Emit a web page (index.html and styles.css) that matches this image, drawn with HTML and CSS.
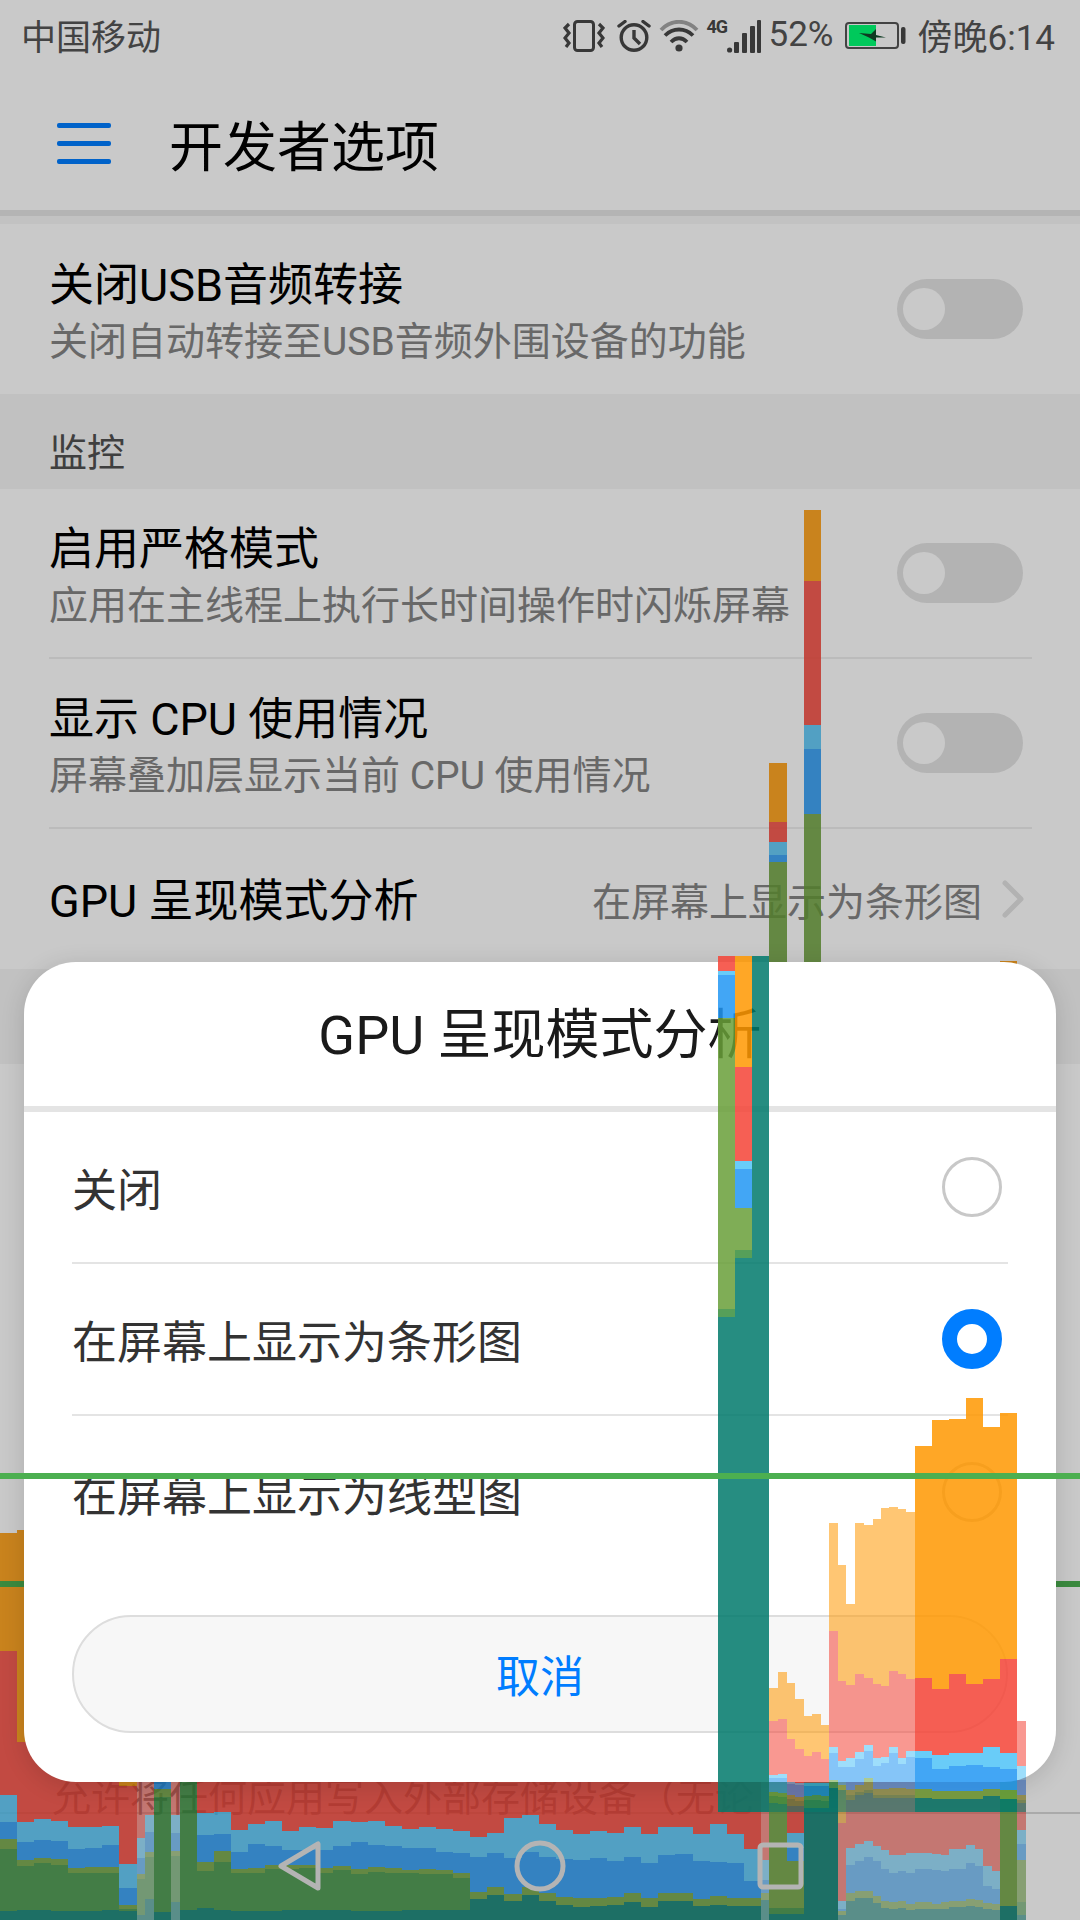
FILE: index.html
```html
<!DOCTYPE html>
<html lang="zh-CN">
<head>
    <meta charset="UTF-8">
    <meta name="viewport" content="width=device-width, initial-scale=1.0">
    <title>开发者选项</title>
    <link rel="stylesheet" href="styles.css">
</head>
<body>
    <div class="screen">
        <div class="status-bar">
            <span class="carrier">中国移动</span>
            <div class="status-right">
                <svg class="ic-vibrate" width="42" height="32" viewBox="0 0 42 32" fill="none" stroke="#484848">
                    <rect x="11.5" y="1.5" width="19" height="29" rx="3" stroke-width="3"/>
                    <path d="M6 4 L2 8 L6 13 L2 18 L6 23 L3 27" stroke-width="3.2"/>
                    <path d="M36 4 L40 8 L36 13 L40 18 L36 23 L39 27" stroke-width="3.2"/>
                </svg>
                <svg class="ic-alarm" width="34" height="32" viewBox="0 0 34 32" fill="none" stroke="#484848" stroke-width="3.4">
                    <circle cx="17" cy="17.5" r="12.8"/>
                    <path d="M17 10 V18 L23 24"/>
                    <path d="M2 6 L8 1.5 M32 6 L26 1.5" stroke-linecap="round"/>
                </svg>
                <svg class="ic-wifi" width="40" height="32" viewBox="0 0 40 32" fill="none" stroke-width="3.8">
                    <path d="M2 10 C12 -1 28 -1 38 10" stroke="#a6a6a6"/>
                    <path d="M6 15.5 C14 7.5 26 7.5 34 15.5" stroke="#484848"/>
                    <path d="M12 22 C17 17 23 17 28 22" stroke="#484848"/>
                    <circle cx="20" cy="28" r="3.6" fill="#484848" stroke="none"/>
                </svg>
                <div class="net">
                    <span class="net-type">4G</span>
                    <svg width="34" height="33" viewBox="0 0 34 33" fill="#484848">
                        <circle cx="2.6" cy="30" r="2.6"/>
                        <rect x="7" y="22" width="5" height="11" rx="1"/>
                        <rect x="15" y="13" width="5" height="20" rx="1"/>
                        <rect x="23" y="6" width="5" height="27" rx="1"/>
                        <rect x="30" y="0" width="4" height="33" rx="1"/>
                    </svg>
                </div>
                <span class="battery-pct">52%</span>
                <svg class="ic-battery" width="61" height="28" viewBox="0 0 61 28">
                    <rect x="1" y="1" width="52" height="25" rx="3" fill="none" stroke="#565656" stroke-width="2"/>
                    <rect x="4" y="3" width="27" height="21" fill="#00ff74"/>
                    <path d="M14 11 L26 12 L31 7 V13 L41 15.5 H31 V19.5 L24 15.5 Z" fill="#124a2b"/>
                    <rect x="56" y="5" width="4.5" height="17" rx="2" fill="#484848"/>
                </svg>
                <span class="clock">傍晚6:14</span>
            </div>
        </div>

        <div class="toolbar">
            <div class="menu-icon"><i></i><i></i><i></i></div>
            <h1>开发者选项</h1>
        </div>

        <div class="top-gap"></div>

        <div class="row row-first">
            <div class="row-text">
                <div class="row-title">关闭USB音频转接</div>
                <div class="row-sub">关闭自动转接至USB音频外围设备的功能</div>
            </div>
            <div class="switch"><span></span></div>
        </div>

        <div class="section">监控</div>

        <div class="row">
            <div class="row-text">
                <div class="row-title">启用严格模式</div>
                <div class="row-sub">应用在主线程上执行长时间操作时闪烁屏幕</div>
            </div>
            <div class="switch"><span></span></div>
        </div>
        <div class="row">
            <div class="row-text">
                <div class="row-title">显示 CPU 使用情况</div>
                <div class="row-sub">屏幕叠加层显示当前 CPU 使用情况</div>
            </div>
            <div class="switch"><span></span></div>
        </div>
        <div class="row row-single">
            <div class="row-title">GPU 呈现模式分析</div>
            <div class="row-value">
                在屏幕上显示为条形图
                <svg width="24" height="38" viewBox="0 0 24 38" fill="none" stroke="#e2e2e2" stroke-width="5" stroke-linecap="round" stroke-linejoin="round">
                    <path d="M4 3 L20 19 L4 35"/>
                </svg>
            </div>
        </div>

        <div class="section section-blank"></div>

        <div class="row-tail">
            <span>允许将任何应用写入外部存储设备（无论</span>
        </div>
        <div class="nav-space"></div>
    </div>

    <svg class="bars bars-under" id="bars-under" width="1080" height="1920"></svg>
    <div class="scrim"></div>

    <div class="dialog">
        <div class="dialog-title">GPU 呈现模式分析</div>
        <div class="option">
            <span>关闭</span>
            <div class="radio"></div>
        </div>
        <div class="option">
            <span>在屏幕上显示为条形图</span>
            <div class="radio radio-on"></div>
        </div>
        <div class="option option-last">
            <span>在屏幕上显示为线型图</span>
            <div class="radio"></div>
        </div>
        <div class="cancel">取消</div>
    </div>

    <svg class="bars bars-over" id="bars-over" width="1080" height="1920"></svg>

    <div class="nav-bar">
        <svg width="1080" height="108" viewBox="0 0 1080 108" fill="none" stroke="#b4b4b4" stroke-width="5" stroke-linejoin="round">
            <path d="M281 54 L318 32 V76 Z"/>
            <circle cx="540" cy="54" r="23"/>
            <rect x="760" y="33" width="41" height="42" rx="3"/>
        </svg>
    </div>

    <script src="bars.js"></script>
</body>
</html>
```

FILE: styles.css
```css
* {
    box-sizing: border-box;
}
body {
    margin: 0;
    width: 1080px;
    height: 1920px;
    position: relative;
    overflow: hidden;
    background-color: #fff;
    font-family: Roboto, "Noto Sans CJK SC", sans-serif;
}
.screen {
    height: 1920px;
    display: flex;
    flex-direction: column;
    color: #000;
}

/* status bar */
.status-bar {
    height: 72px;
    flex: none;
    display: flex;
    justify-content: space-between;
    align-items: center;
    padding: 0 25px 0 21px;
    color: #555;
    font-size: 35px;
}
.status-right {
    display: flex;
    align-items: center;
}
.carrier,
.battery-pct,
.clock {
    margin-bottom: 3px;
}
.ic-alarm {
    margin-left: 12px;
}
.ic-wifi {
    margin-left: 8px;
}
.net {
    margin-left: 10px;
    width: 52px;
    height: 33px;
    display: flex;
    justify-content: flex-end;
    position: relative;
}
.net-type {
    position: absolute;
    left: -2px;
    top: -3px;
    font-size: 18px;
    font-weight: 700;
    letter-spacing: -1px;
    line-height: 20px;
    color: #484848;
}
.battery-pct {
    margin-left: 8px;
}
.ic-battery {
    margin-left: 11px;
}
.clock {
    margin-left: 12px;
}

/* toolbar */
.toolbar {
    height: 144px;
    flex: none;
    display: flex;
    align-items: center;
    padding: 4px 0 0 57px;
    border-bottom: 6px solid #e5e5e5;
}
.menu-icon {
    width: 54px;
    display: flex;
    flex-direction: column;
    gap: 13px;
}
.menu-icon i {
    display: block;
    height: 5px;
    border-radius: 2px;
    background-color: #007dff;
}
.toolbar h1 {
    margin: 0 0 0 58px;
    font-size: 54px;
    font-weight: 400;
}
.top-gap {
    height: 8px;
    flex: none;
    background-color: #f7f7f7;
}

/* list rows */
.row {
    height: 170px;
    flex: none;
    margin: 0 48px 0 49px;
    display: flex;
    justify-content: space-between;
    align-items: center;
    border-bottom: 2px solid #eee;
}
.row-first {
    border-bottom: none;
}
.row-single {
    height: 140px;
    border-bottom: none;
}
.row-text {
    margin-top: 9px;
}
.row-title {
    font-size: 45px;
    line-height: 56px;
}
.row-single .row-title {
    margin-top: 5px;
}
.row-sub {
    font-size: 39px;
    line-height: 56px;
    color: #858585;
}
.row-value {
    display: flex;
    align-items: center;
    gap: 16px;
    padding-right: 7px;
    font-size: 39px;
    color: #858585;
}
.row-value svg {
    margin-left: 3px;
}
.switch {
    width: 126px;
    height: 60px;
    margin-right: 9px;
    padding-left: 6px;
    display: flex;
    align-items: center;
    border-radius: 30px;
    background-color: #e4e4e4;
}
.switch span {
    width: 42px;
    height: 42px;
    border-radius: 50%;
    background-color: #fff;
}
.section {
    height: 95px;
    flex: none;
    padding: 35px 0 0 49px;
    background-color: #f5f5f5;
    color: #505050;
    font-size: 38px;
    line-height: 48px;
}
.row-tail {
    flex: 1;
    display: flex;
    align-items: flex-end;
    padding-left: 52px;
    border-bottom: 2px solid #d8d8d8;
    font-size: 39px;
    line-height: 28px;
    color: #858585;
    white-space: nowrap;
}
.nav-space {
    height: 106px;
    flex: none;
}

/* overlays */
.bars {
    position: absolute;
    left: 0;
    top: 0;
}
.scrim {
    position: absolute;
    left: 0;
    top: 0;
    width: 1080px;
    height: 1920px;
    background-color: rgba(0, 0, 0, 0.21);
}
.nav-bar {
    position: absolute;
    left: 0;
    bottom: 0;
    height: 108px;
}
.nav-bar svg {
    display: block;
}

/* dialog */
.dialog {
    position: absolute;
    left: 24px;
    top: 962px;
    width: 1032px;
    height: 820px;
    padding: 0 48px;
    border-radius: 52px;
    background-color: #fff;
    box-shadow: 0 4px 24px rgba(0, 0, 0, 0.14);
}
.dialog-title {
    height: 150px;
    margin: 0 -48px;
    display: flex;
    justify-content: center;
    align-items: center;
    padding-bottom: 8px;
    border-bottom: 6px solid #e4e4e4;
    font-size: 54px;
    color: #1a1a1a;
}
.option {
    height: 152px;
    display: flex;
    justify-content: space-between;
    align-items: center;
    padding-right: 6px;
    border-bottom: 2px solid #e4e4e4;
    font-size: 45px;
    color: #333;
}
.option-last {
    border-bottom: none;
}
.radio {
    width: 60px;
    height: 60px;
    border-radius: 50%;
    border: 3px solid #c8c8c8;
}
.radio-on {
    border: 15px solid #007dff;
}
.cancel {
    height: 118px;
    margin-top: 47px;
    display: flex;
    justify-content: center;
    align-items: center;
    border: 2px solid #ddd;
    border-radius: 59px;
    background-color: #f7f7f7;
    font-size: 44px;
    color: #007dff;
}
```

FILE: bars.js
```js
// GPU profile bars, top to bottom of each column
const colors = ['#ff9800', '#f44336', '#4fc3f7', '#2196f3', '#689f38', '#388e3c', '#00796b'];
const SOLID = 0.85;
const PALE = 0.55;

// x, alpha, then the top of each color
const underCols = [
    [0, SOLID, 1533, 1651, 1795, 1822, 1839, 1849, 1911],
    [17, SOLID, 1530, 1742, 1822, 1842, 1860, 1866, 1910],
    [34, SOLID, 1700, 1700, 1819, 1840, 1858, 1863, 1910],
    [51, SOLID, 1700, 1700, 1821, 1841, 1859, 1865, 1911],
    [68, SOLID, 1700, 1700, 1827, 1849, 1868, 1873, 1911],
    [85, SOLID, 1700, 1700, 1827, 1848, 1867, 1873, 1911],
    [102, SOLID, 1700, 1700, 1826, 1845, 1867, 1873, 1910],
    [119, SOLID, 1770, 1786, 1864, 1888, 1905, 1909, 1911],
    [137, PALE, 1782, 1782, 1838, 1858, 1874, 1879, 1915],
    [145, PALE, 1782, 1782, 1815, 1832, 1852, 1857, 1899],
    [154, SOLID, 1700, 1700, 1700, 1782, 1789, 1797, 1912],
    [171, PALE, 1782, 1782, 1815, 1833, 1851, 1856, 1902],
    [180, SOLID, 1700, 1700, 1700, 1700, 1700, 1700, 1910],
    [197, SOLID, 1700, 1700, 1813, 1835, 1862, 1871, 1908],
    [214, SOLID, 1700, 1700, 1812, 1834, 1851, 1862, 1910],
    [231, SOLID, 1700, 1700, 1830, 1852, 1869, 1873, 1911],
    [248, SOLID, 1700, 1700, 1824, 1844, 1868, 1873, 1911],
    [265, SOLID, 1700, 1700, 1821, 1846, 1865, 1869, 1911],
    [282, SOLID, 1700, 1700, 1831, 1850, 1865, 1869, 1910],
    [299, SOLID, 1700, 1700, 1827, 1850, 1865, 1868, 1910],
    [316, SOLID, 1700, 1700, 1828, 1850, 1868, 1873, 1910],
    [333, SOLID, 1700, 1700, 1821, 1846, 1866, 1870, 1910],
    [351, SOLID, 1700, 1700, 1822, 1842, 1869, 1874, 1911],
    [368, SOLID, 1700, 1700, 1821, 1845, 1867, 1872, 1911],
    [385, SOLID, 1700, 1700, 1826, 1846, 1868, 1873, 1911],
    [402, SOLID, 1700, 1700, 1829, 1848, 1870, 1873, 1910],
    [419, SOLID, 1700, 1700, 1827, 1848, 1869, 1874, 1910],
    [436, SOLID, 1700, 1700, 1829, 1852, 1870, 1874, 1910],
    [453, SOLID, 1700, 1700, 1831, 1853, 1873, 1878, 1910],
    [470, SOLID, 1700, 1700, 1837, 1857, 1892, 1899, 1899],
    [487, SOLID, 1700, 1700, 1833, 1853, 1887, 1895, 1895],
    [504, SOLID, 1700, 1700, 1818, 1858, 1894, 1901, 1901],
    [522, SOLID, 1700, 1700, 1815, 1852, 1887, 1895, 1895],
    [539, SOLID, 1700, 1700, 1824, 1857, 1893, 1901, 1901],
    [556, SOLID, 1700, 1700, 1830, 1859, 1897, 1905, 1905],
    [573, SOLID, 1700, 1700, 1834, 1860, 1898, 1907, 1907],
    [590, SOLID, 1700, 1700, 1831, 1858, 1898, 1906, 1906],
    [607, SOLID, 1700, 1700, 1833, 1861, 1897, 1905, 1905],
    [624, SOLID, 1700, 1700, 1827, 1857, 1893, 1902, 1902],
    [641, SOLID, 1700, 1700, 1834, 1863, 1898, 1907, 1907],
    [658, SOLID, 1700, 1700, 1827, 1855, 1893, 1901, 1901],
    [675, SOLID, 1700, 1700, 1827, 1854, 1893, 1901, 1901],
    [693, SOLID, 1700, 1700, 1834, 1861, 1899, 1906, 1906],
    [710, SOLID, 1700, 1700, 1824, 1862, 1896, 1905, 1905],
    [727, SOLID, 1700, 1700, 1834, 1863, 1898, 1906, 1906],
    [744, SOLID, 1700, 1700, 1849, 1881, 1898, 1906, 1906],
    [761, PALE, 1700, 1700, 1860, 1880, 1893, 1900, 1900],
    [769, SOLID, 763, 822, 842, 855, 862, 1908, 1914],
    [787, SOLID, 1700, 1700, 1833, 1848, 1861, 1908, 1914],
    [804, SOLID, 510, 581, 725, 749, 814, 1500, 1500],
    [821, SOLID, 1700, 1700, 1700, 1700, 1700, 1700, 1700],
    [838, PALE, 1700, 1823, 1901, 1909, 1911, 1915, 1915],
    [846, PALE, 1700, 1700, 1848, 1865, 1893, 1901, 1901],
    [855, PALE, 1700, 1700, 1844, 1861, 1891, 1898, 1898],
    [864, PALE, 1700, 1700, 1841, 1857, 1891, 1898, 1898],
    [873, PALE, 1700, 1700, 1846, 1861, 1896, 1903, 1903],
    [881, PALE, 1700, 1700, 1850, 1869, 1901, 1908, 1908],
    [889, PALE, 1700, 1700, 1855, 1873, 1902, 1909, 1909],
    [898, PALE, 1700, 1700, 1855, 1871, 1901, 1908, 1908],
    [906, PALE, 1700, 1700, 1853, 1873, 1904, 1910, 1910],
    [915, PALE, 1700, 1700, 1853, 1869, 1902, 1909, 1909],
    [932, PALE, 1700, 1700, 1854, 1870, 1904, 1909, 1909],
    [941, PALE, 1700, 1700, 1855, 1871, 1902, 1909, 1909],
    [949, PALE, 1700, 1700, 1849, 1869, 1901, 1907, 1907],
    [966, PALE, 1700, 1700, 1845, 1863, 1899, 1906, 1906],
    [975, PALE, 1700, 1700, 1849, 1866, 1900, 1907, 1907],
    [983, PALE, 1700, 1700, 1866, 1886, 1903, 1909, 1909],
    [992, PALE, 1700, 1700, 1871, 1889, 1904, 1910, 1910],
    [1000, SOLID, 961, 970, 970, 970, 970, 1906, 1906],
    [1017, PALE, 1700, 1700, 1830, 1844, 1860, 1902, 1915],
    [1026]
];

const overCols = [
    [718, SOLID, 956, 956, 971, 975, 1018, 1309, 1317],
    [735, SOLID, 956, 1067, 1161, 1169, 1208, 1250, 1258],
    [752, SOLID, 956, 956, 956, 956, 956, 956, 956],
    [769, PALE, 1688, 1721, 1775, 1778, 1792, 1796, 1803],
    [778, PALE, 1672, 1719, 1774, 1778, 1793, 1797, 1804],
    [787, PALE, 1683, 1739, 1782, 1784, 1795, 1799, 1806],
    [795, PALE, 1699, 1749, 1783, 1785, 1797, 1801, 1806],
    [804, PALE, 1716, 1756, 1783, 1786, 1796, 1800, 1808],
    [812, PALE, 1714, 1752, 1783, 1786, 1795, 1800, 1808],
    [821, PALE, 1725, 1759, 1783, 1786, 1796, 1801, 1808],
    [829, PALE, 1523, 1631, 1747, 1753, 1780, 1788, 1788],
    [838, PALE, 1565, 1681, 1761, 1767, 1785, 1790, 1790],
    [846, PALE, 1604, 1685, 1758, 1767, 1790, 1795, 1800],
    [855, PALE, 1523, 1674, 1752, 1759, 1785, 1792, 1795],
    [864, PALE, 1525, 1678, 1745, 1751, 1778, 1790, 1793],
    [873, PALE, 1519, 1684, 1758, 1766, 1789, 1795, 1798],
    [881, PALE, 1508, 1686, 1757, 1763, 1789, 1795, 1798],
    [889, PALE, 1507, 1671, 1747, 1753, 1788, 1795, 1798],
    [898, PALE, 1509, 1674, 1758, 1764, 1788, 1795, 1798],
    [906, PALE, 1512, 1679, 1751, 1757, 1789, 1795, 1798],
    [915, SOLID, 1446, 1678, 1751, 1758, 1789, 1798, 1798],
    [932, SOLID, 1420, 1689, 1755, 1769, 1791, 1799, 1799],
    [949, SOLID, 1419, 1674, 1753, 1766, 1791, 1799, 1799],
    [966, SOLID, 1398, 1684, 1753, 1765, 1791, 1799, 1799],
    [983, SOLID, 1427, 1679, 1747, 1767, 1789, 1796, 1796],
    [1000, SOLID, 1413, 1659, 1753, 1769, 1790, 1799, 1799],
    [1017, PALE, 1721, 1721, 1766, 1780, 1795, 1800, 1803],
    [1026]
];

function addRect(svg, x, y, w, h, fill, alpha) {
    const rect = document.createElementNS('http://www.w3.org/2000/svg', 'rect');
    rect.setAttribute('x', x);
    rect.setAttribute('y', y);
    rect.setAttribute('width', w);
    rect.setAttribute('height', h);
    rect.setAttribute('fill', fill);
    rect.setAttribute('fill-opacity', alpha);
    svg.appendChild(rect);
}

function drawBars(id, cols, bottom, lineY) {
    const svg = document.getElementById(id);
    for (let i = 0; i < cols.length - 1; i++) {
        const x = cols[i][0];
        const w = cols[i + 1][0] - x;
        const alpha = cols[i][1];
        const tops = cols[i].slice(2).concat(bottom);
        for (let c = 0; c < colors.length; c++) {
            const h = tops[c + 1] - tops[c];
            if (h > 0) addRect(svg, x, tops[c], w, h, colors[c], alpha);
        }
    }
    addRect(svg, 0, lineY, 1080, 6, '#4caf50', 1);
}

drawBars('bars-under', underCols, 1920, 1581);
drawBars('bars-over', overCols, 1812, 1473);
```
